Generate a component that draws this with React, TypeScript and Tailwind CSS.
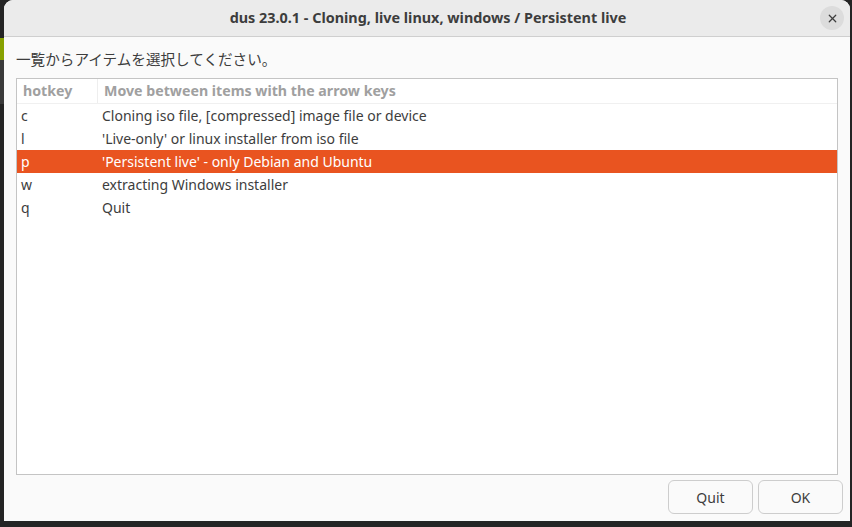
import { X } from 'lucide-react';

const FONT = { fontFamily: '"Noto Sans", "Noto Sans CJK JP", sans-serif' };

const rows = [
  { key: 'c', label: 'Cloning iso file, [compressed] image file or device' },
  { key: 'l', label: "'Live-only' or linux installer from iso file" },
  { key: 'p', label: "'Persistent live' - only Debian and Ubuntu", selected: true },
  { key: 'w', label: 'extracting Windows installer' },
  { key: 'q', label: 'Quit' },
];

export default function App() {
  return (
    <div className="w-[852px] h-[527px] bg-[#242424] flex overflow-hidden" style={FONT}>
      {/* desktop sliver on the left */}
      <div className="w-[4px] flex flex-col">
        <div className="h-[38px]" />
        <div className="h-[22px] bg-[#87a100]" />
        <div className="h-[44px] bg-[#3a3a3a]" />
      </div>

      {/* Dialog window */}
      <div className="w-[846px] h-[521px] bg-[#fafafa] rounded-t-[9px] flex flex-col overflow-hidden">
        {/* Title bar */}
        <div className="h-[37px] bg-[#ebebeb] border-b border-[#cfcfcf] flex items-center relative">
          <div className="flex-1 text-center text-[14.4px] font-bold text-[#3d3d3d] pl-[2px]">
            dus 23.0.1 - Cloning, live linux, windows / Persistent live
          </div>
          <div className="absolute right-[6px] top-[6px] w-[24px] h-[24px] rounded-full bg-[#dcdcdc] flex items-center justify-center">
            <X size={13} strokeWidth={2.2} color="#3d3d3d" />
          </div>
        </div>

        {/* Body */}
        <div className="flex-1 flex flex-col px-[12px]">
          <div className="h-[41px] flex items-center text-[14.6px] text-[#3d3d3d] pt-[5px]">
            一覧からアイテムを選択してください。
          </div>

          <div className="h-[397px] bg-white border border-[#c4c4c4] flex flex-col">
            <div className="h-[25px] flex items-center border-b border-[#f0f0f0] text-[14.2px] font-bold text-[#a0a0a0]">
              <div className="w-[81px] h-full flex items-center pl-[6px] border-r border-[#eeeeee]">hotkey</div>
              <div className="pl-[6px]">Move between items with the arrow keys</div>
            </div>
            {rows.map((r) => (
              <div
                key={r.key}
                className={
                  r.selected
                    ? 'h-[23px] flex items-center text-[14px] bg-[#e95420] text-white'
                    : 'h-[23px] flex items-center text-[14px] text-[#3d3d3d]'
                }
              >
                <div className="w-[81px] pl-[4px]">{r.key}</div>
                <div className="pl-[4px]">{r.label}</div>
              </div>
            ))}
          </div>

          <div className="flex justify-end gap-[5px] pt-[5px] mr-[-5px]">
            <button className="w-[85px] h-[34px] rounded-[6px] border border-[#cdcdcd] bg-[#fafafa] text-[14px] text-[#3d3d3d]">
              Quit
            </button>
            <button className="w-[85px] h-[34px] rounded-[6px] border border-[#cdcdcd] bg-[#fafafa] text-[14px] text-[#3d3d3d]">
              OK
            </button>
          </div>
        </div>
      </div>
    </div>
  );
}
